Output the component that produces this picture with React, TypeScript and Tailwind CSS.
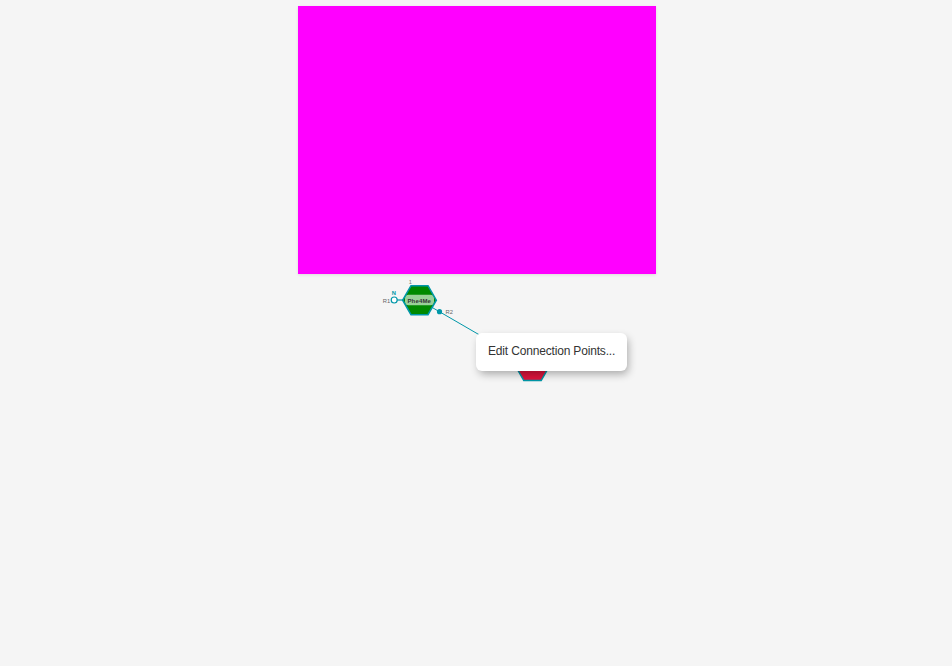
function MonomerCanvas() {
  return (
    <svg
      className="absolute inset-0 h-full w-full font-['Liberation_Sans',Arial,sans-serif]"
      viewBox="0 0 952 666"
    >
      <g stroke="#0097a8" strokeWidth="1">
        <line x1="397" y1="300" x2="403" y2="300" strokeWidth="1.2" />
        <line x1="431" y1="306.8" x2="533" y2="366" />
      </g>

      <polygon
        points="402.7,300.2 411,285.7 428,285.7 436.3,300.2 428,314.7 411,314.7"
        fill="#008a00"
      />
      <rect x="405" y="294.8" width="29" height="10.4" rx="3.5" fill="#fff" fillOpacity="0.6" />
      <polygon
        points="402.7,300.2 411,285.7 428,285.7 436.3,300.2 428,314.7 411,314.7"
        fill="none"
        stroke="#0097a8"
        strokeWidth="1.6"
      />
      <text x="419.2" y="302.9" textAnchor="middle" fontSize="6" fontWeight="700" fill="#333" textLength="23.5">
        Phe4Me
      </text>
      <text x="408.7" y="284" fontSize="5.6" fill="#7c7c7c">1</text>

      <circle cx="394.2" cy="300" r="3" fill="#fff" stroke="#0097a8" strokeWidth="1.2" />
      <text x="391.8" y="295" fontSize="5.8" fontWeight="700" fill="#0097a8">N</text>
      <text x="382.8" y="302.9" fontSize="5.8" fill="#666">R1</text>

      <circle cx="439.5" cy="311.7" r="2.6" fill="#0097a8" />
      <text x="445.6" y="313.9" fontSize="5.8" fill="#666">R2</text>

      <polygon
        points="515.5,366 524,351.5 541,351.5 549.5,366 541.2,380.6 523.8,380.6"
        fill="#dc143c"
        stroke="#0097a8"
        strokeWidth="1.5"
      />
    </svg>
  );
}

function ContextMenu() {
  return (
    <div
      role="menu"
      className="absolute left-[476px] top-[333px] flex h-[38px] w-[151px] items-center rounded-md bg-white pb-0.5 pl-3 shadow-[2px_4px_8px_-1px_rgba(0,0,0,0.32)]"
    >
      <button
        role="menuitem"
        className="whitespace-nowrap font-['Liberation_Sans',Arial,sans-serif] text-[12px] leading-4 tracking-[-0.17px] text-[#333]"
      >
        Edit Connection Points...
      </button>
    </div>
  );
}

export default function App() {
  return (
    <main className="relative h-[666px] w-full overflow-hidden bg-[#f5f5f5] pt-1.5">
      <div className="ml-[298px] h-[268px] w-[358px] bg-[#ff00ff] shadow-[0_1px_3px_rgba(0,0,0,0.1)]" />
      <MonomerCanvas />
      <ContextMenu />
    </main>
  );
}
